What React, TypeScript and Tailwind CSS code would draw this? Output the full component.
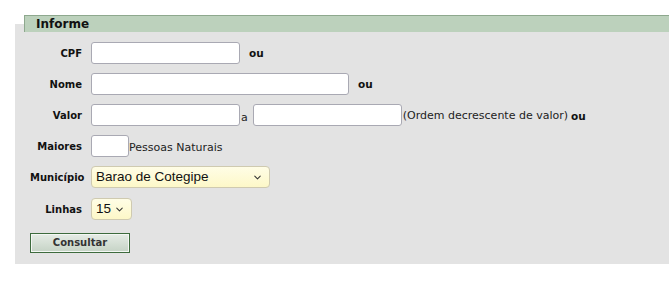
import { ChevronDown } from "lucide-react";

const font = "font-['DejaVu_Sans',Verdana,sans-serif]";

type RowProps = {
  label: string;
  children: React.ReactNode;
};

function Row({ label, children }: RowProps) {
  return (
    <div className="flex h-[22px] items-center">
      <span className="w-[61px] shrink-0 pr-[9px] text-right text-[10px] font-bold text-[#111]">
        {label}
      </span>
      {children}
    </div>
  );
}

function TextBox({ width }: { width: string }) {
  return (
    <input
      type="text"
      className={`h-[22px] ${width} shrink-0 rounded-[3px] border border-[#a9a9b3] bg-white outline-none`}
    />
  );
}

function Select({ value, width }: { value: string; width: string }) {
  return (
    <div
      className={`flex h-[22px] ${width} shrink-0 items-center justify-between rounded-[4px] border border-[#cfcab0] bg-gradient-to-b from-[#fffde6] to-[#fdf8c8] pl-[4px] pr-[6px] font-['Liberation_Sans',Arial,sans-serif] text-[13.5px] text-[#111]`}
    >
      <span>{value}</span>
      <ChevronDown size={11} strokeWidth={2.2} className="shrink-0 text-[#333]" />
    </div>
  );
}

export default function App() {
  return (
    <div className={`h-[284px] w-[669px] bg-white pt-[15px] ${font}`}>
      <div className="relative z-10 ml-[24px] flex h-[17px] items-center border-t border-l border-[#8ea88e] bg-[#bcd1bc] pl-[11px] text-[12px] font-bold text-[#111]">
        Informe
      </div>
      <div className="-mt-[8px] ml-[15px] h-[240px] bg-[#e3e3e3] pt-[18px] pl-[15px]">
        <div className="flex flex-col gap-[9px]">
          <Row label="CPF">
            <TextBox width="w-[149px]" />
            <span className="ml-[9px] mt-[2px] text-[10.5px] font-bold text-[#111]">ou</span>
          </Row>
          <Row label="Nome">
            <TextBox width="w-[258px]" />
            <span className="ml-[9px] mt-[2px] text-[10.5px] font-bold text-[#111]">ou</span>
          </Row>
          <Row label="Valor">
            <TextBox width="w-[149px]" />
            <span className="ml-[1px] mr-[5px] mt-[6px] text-[11px] text-[#222]">a</span>
            <TextBox width="w-[149px]" />
            <span className="mt-[3px] ml-[1px] text-[11px] text-[#222]">
              (Ordem decrescente de valor)
            </span>
            <span className="ml-[3px] mt-[3px] text-[10.5px] font-bold text-[#111]">ou</span>
          </Row>
          <Row label="Maiores">
            <TextBox width="w-[38px]" />
            <span className="mt-[4px] text-[11px] text-[#222]">Pessoas Naturais</span>
          </Row>
          <Row label="Município">
            <Select value="Barao de Cotegipe" width="w-[179px]" />
          </Row>
          <div className="pt-[1px]">
            <Row label="Linhas">
              <Select value="15" width="w-[41px]" />
            </Row>
          </div>
          <div>
            <button
              type="button"
              className="h-[20px] w-[100px] border border-[#3d6b3d] bg-gradient-to-b from-[#e6ece6] to-[#c5d3c5] text-[10px] font-bold text-[#333] shadow-[inset_0_0_0_1px_#f4f7f4]"
            >
              Consultar
            </button>
          </div>
        </div>
      </div>
    </div>
  );
}
